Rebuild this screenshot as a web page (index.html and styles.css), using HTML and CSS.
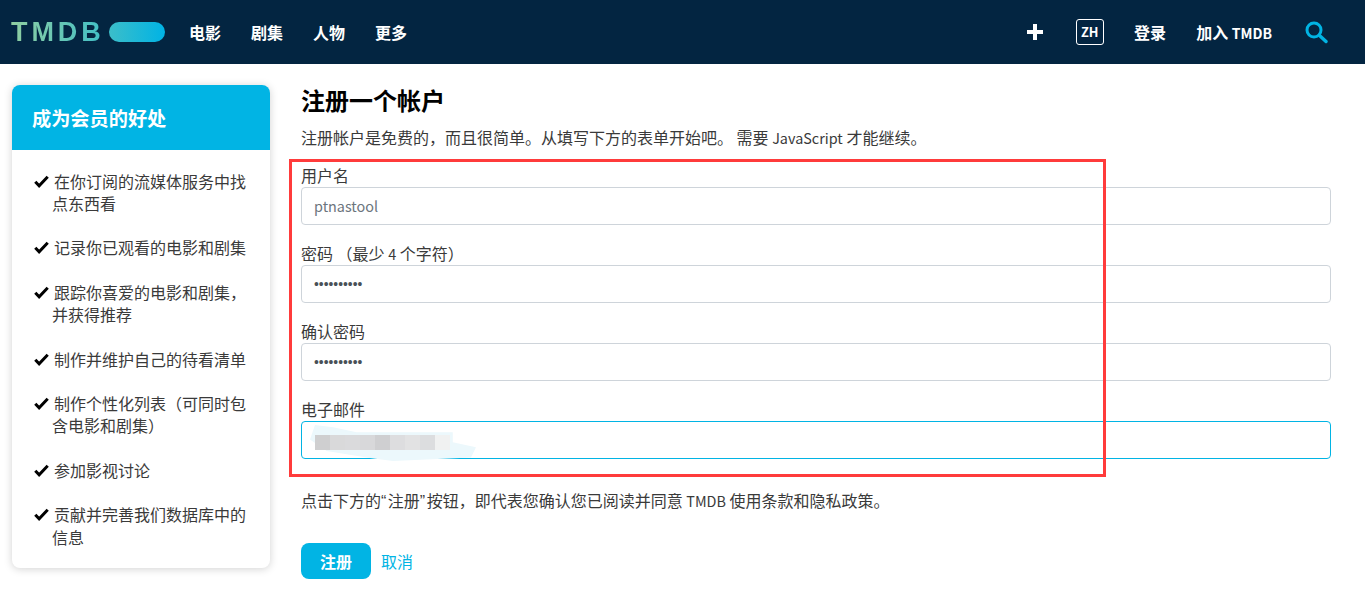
FILE: index.html
```html
<!DOCTYPE html>
<html lang="zh-CN">
<head>
<meta charset="utf-8">
<title>注册</title>
<link rel="stylesheet" href="styles.css">
</head>
<body>
<header class="topbar">
  <div class="nav-left">
    <div class="logo"><span class="logo-text">TMDB</span><span class="logo-pill"></span></div>
    <nav class="menu">
      <a>电影</a><a>剧集</a><a>人物</a><a>更多</a>
    </nav>
  </div>
  <div class="nav-right">
    <svg class="plus" viewBox="0 0 16 16" width="16" height="16"><path d="M6 0h4v6h6v4h-6v6H6v-6H0V6h6z" fill="#fff"/></svg>
    <span class="lang">ZH</span>
    <a class="login">登录</a>
    <a class="join">加入 <span class="join-latin">TMDB</span></a>
    <svg class="search" viewBox="0 0 24 24" width="24" height="24"><circle cx="10" cy="10" r="7" fill="none" stroke="#01b4e4" stroke-width="3"/><path d="M15.5 15.5l6.5 6" stroke="#01b4e4" stroke-width="3.4" stroke-linecap="round"/></svg>
  </div>
</header>
<main class="page">
  <aside class="card">
    <h3 class="card-head">成为会员的好处</h3>
    <ul class="perks">
      <li><svg class="check" viewBox="0 0 14 12"><path d="M1.2 6.2l3.6 3.8L12.8 1.6" fill="none" stroke="#000" stroke-width="2.8"/></svg>在你订阅的流媒体服务中找点东西看</li>
      <li><svg class="check" viewBox="0 0 14 12"><path d="M1.2 6.2l3.6 3.8L12.8 1.6" fill="none" stroke="#000" stroke-width="2.8"/></svg>记录你已观看的电影和剧集</li>
      <li><svg class="check" viewBox="0 0 14 12"><path d="M1.2 6.2l3.6 3.8L12.8 1.6" fill="none" stroke="#000" stroke-width="2.8"/></svg>跟踪你喜爱的电影和剧集，并获得推荐</li>
      <li><svg class="check" viewBox="0 0 14 12"><path d="M1.2 6.2l3.6 3.8L12.8 1.6" fill="none" stroke="#000" stroke-width="2.8"/></svg>制作并维护自己的待看清单</li>
      <li><svg class="check" viewBox="0 0 14 12"><path d="M1.2 6.2l3.6 3.8L12.8 1.6" fill="none" stroke="#000" stroke-width="2.8"/></svg>制作个性化列表（可同时包含电影和剧集）</li>
      <li><svg class="check" viewBox="0 0 14 12"><path d="M1.2 6.2l3.6 3.8L12.8 1.6" fill="none" stroke="#000" stroke-width="2.8"/></svg>参加影视讨论</li>
      <li><svg class="check" viewBox="0 0 14 12"><path d="M1.2 6.2l3.6 3.8L12.8 1.6" fill="none" stroke="#000" stroke-width="2.8"/></svg>贡献并完善我们数据库中的信息</li>
    </ul>
  </aside>
  <section class="content">
    <h2 class="title">注册一个帐户</h2>
    <p class="intro">注册帐户是免费的，而且很简单。从填写下方的表单开始吧。 需要 <span class="latin">JavaScript</span> 才能继续。</p>
    <form class="form">
      <div class="annotation"></div>
      <label class="field"><span class="label">用户名</span><input class="input" type="text" value="ptnastool"></label>
      <label class="field"><span class="label">密码 （最少 <span class="latin">4</span> 个字符）</span><input class="input secret" type="password" value="1234567890"></label>
      <label class="field"><span class="label">确认密码</span><input class="input secret" type="password" value="1234567890"></label>
      <label class="field"><span class="label">电子邮件</span><input class="input focus" type="text" value="">
        <span class="smear"></span><span class="mosaic"><i></i><i></i><i></i><i></i><i></i><i></i><i></i><i></i><i></i></span>
      </label>
    </form>
    <p class="terms">点击下方的<span class="quote">“</span>注册<span class="quote">”</span>按钮，即代表您确认您已阅读并同意 <span class="latin">TMDB</span> 使用条款和隐私政策。</p>
    <div class="actions"><button class="submit" type="button">注册</button><a class="cancel">取消</a></div>
  </section>
</main>
</body>
</html>
```

FILE: styles.css
```css
* { box-sizing: border-box; }
html, body { margin: 0; padding: 0; }
body {
  font-family: "Noto Sans CJK SC", "Noto Sans", sans-serif;
  font-size: 16px;
  color: #3a3a3a;
  background: #fff;
  height: 609px;
  overflow: hidden;
}
a { color: inherit; text-decoration: none; }
.latin { font-size: 14.4px; }
.quote { font-family: "Liberation Sans", sans-serif; letter-spacing: 1.5px; }

.topbar {
  height: 64px;
  background: #032541;
  display: flex;
  justify-content: space-between;
  align-items: center;
  color: #fff;
  padding: 0 37px 0 11px;
}
.nav-left, .nav-right { display: flex; align-items: center; }
.logo { display: flex; align-items: center; width: 154px; }
.logo-text {
  font-family: "Liberation Sans", sans-serif;
  font-weight: 700;
  font-size: 27px;
  line-height: 1;
  letter-spacing: 3.9px;
  background: linear-gradient(90deg, #90cea1, #3cbec9);
  background-clip: text;
  -webkit-background-clip: text;
  color: transparent;
  width: 98px;
}
.logo-pill {
  width: 56px;
  height: 20px;
  border-radius: 10px;
  background: linear-gradient(90deg, #3cbec9, #00b3e5);
}
.menu { display: flex; gap: 30px; margin-left: 24px; }
.menu a { font-weight: 700; font-size: 16px; line-height: 24px; }
.plus { margin-right: 33px; margin-top: -1px; }
.lang {
  width: 28px;
  height: 26px;
  border: 1px solid #fff;
  border-radius: 3px;
  font-size: 12.8px;
  font-weight: 700;
  line-height: 24px;
  text-align: center;
  margin-right: 30.4px;
}
.login { font-weight: 700; margin-right: 30px; }
.join { font-weight: 700; margin-right: 32px; }
.join-latin { font-size: 14px; }

.page {
  display: flex;
  align-items: flex-start;
  padding: 21px 34px 0 12px;
  gap: 31px;
}
.card {
  width: 258px;
  flex: none;
  height: 483px;
  border-radius: 8px;
  overflow: hidden;
  box-shadow: 0 1px 8px rgba(0, 0, 0, 0.18);
}
.card-head {
  margin: 0;
  height: 65px;
  background: #01b4e4;
  color: #fff;
  font-size: 19.2px;
  font-weight: 700;
  line-height: 67px;
  padding-left: 20px;
}
.perks {
  list-style: none;
  margin: 0;
  padding: 19.6px 20px 0 40px;
}
.perks li {
  line-height: 22.4px;
  margin-bottom: 22px;
}
.check {
  width: 15px;
  height: 13px;
  margin-left: -18px;
  margin-right: 5px;
}

.content { flex: 1; min-width: 0; }
.title {
  margin: 0;
  font-size: 24px;
  line-height: 30px;
  font-weight: 700;
  color: #000;
}
.intro { margin: 10px 0 0; line-height: 24px; }
.form { position: relative; margin-top: 13px; }
.annotation {
  position: absolute;
  left: -12px;
  top: -4px;
  width: 817px;
  height: 318px;
  border: 3px solid #ff3b3b;
  pointer-events: none;
  z-index: 2;
}
.field { display: block; position: relative; margin-bottom: 16px; }
.label { display: block; line-height: 24px; height: 24px; }
.input {
  display: block;
  width: 100%;
  height: 38px;
  border: 1px solid #ced4da;
  border-radius: 4px;
  padding: 0 12px 2px;
  font-family: inherit;
  font-size: 14.4px;
  color: #6c757d;
  background: #fff;
  outline: none;
}
.input.secret { font-family: "Liberation Sans", sans-serif; font-size: 13.8px; color: #495057; padding-bottom: 0; }
.input.focus { border-color: #01b4e4; }
.smear {
  position: absolute;
  left: 9px;
  top: 28px;
  width: 166px;
  height: 36px;
  background: #ecf8fc;
  clip-path: polygon(3% 0, 14% 6%, 28% 20%, 86% 20%, 86% 48%, 100% 62%, 97% 90%, 50% 100%, 36% 92%, 10% 72%, 0 40%);
}
.mosaic {
  position: absolute;
  left: 14px;
  top: 38px;
  display: flex;
  height: 15px;
}
.mosaic i { display: block; width: 15px; background: #d8d9db; }
.mosaic i:nth-child(1) { background: #cfcfd0; }
.mosaic i:nth-child(2) { background: #d9d9da; }
.mosaic i:nth-child(3) { background: #dadadc; }
.mosaic i:nth-child(4) { background: #d8d8da; }
.mosaic i:nth-child(5) { background: #cfcfd1; }
.mosaic i:nth-child(6) { background: #dddddf; }
.mosaic i:nth-child(7) { background: #e2e2e3; }
.mosaic i:nth-child(8) { background: #dcdddf; }
.mosaic i:nth-child(9) { background: #f0f1f1; }

.terms { margin: 29px 0 0; line-height: 24px; }
.actions { display: flex; align-items: center; margin-top: 29px; }
.submit {
  width: 70px;
  height: 36px;
  border: 0;
  border-radius: 8px;
  background: #01b4e4;
  color: #fff;
  font-family: inherit;
  font-size: 16px;
  font-weight: 700;
  padding: 0;
}
.cancel { color: #01b4e4; margin-left: 10px; }
```
